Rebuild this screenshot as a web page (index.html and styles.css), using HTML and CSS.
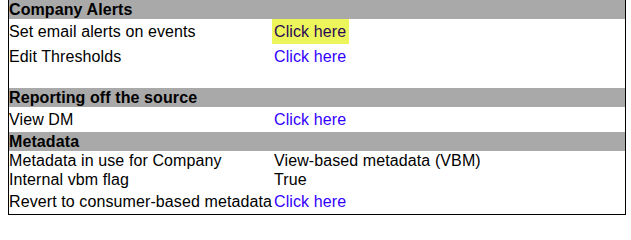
FILE: index.html
```html
<!DOCTYPE html>
<html>
<head>
<meta charset="utf-8">
<link rel="stylesheet" href="styles.css">
</head>
<body>
<table class="settings">
  <tr class="section"><td colspan="2">Company Alerts</td></tr>
  <tr class="linkrow"><td class="label">Set email alerts on events</td><td class="value"><a class="link active" href="#">Click here</a></td></tr>
  <tr class="linkrow"><td class="label">Edit Thresholds</td><td class="value"><a class="link" href="#">Click here</a></td></tr>
  <tr class="plain"><td class="label">&nbsp;</td><td class="value"></td></tr>
  <tr class="section"><td colspan="2">Reporting off the source</td></tr>
  <tr class="linkrow"><td class="label">View DM</td><td class="value"><a class="link" href="#">Click here</a></td></tr>
  <tr class="section"><td colspan="2">Metadata</td></tr>
  <tr class="plain"><td class="label">Metadata in use for Company</td><td class="value text">View-based metadata (VBM)</td></tr>
  <tr class="plain"><td class="label">Internal vbm flag</td><td class="value text">True</td></tr>
  <tr class="linkrow"><td class="label">Revert to consumer-based metadata</td><td class="value"><a class="link" href="#">Click here</a></td></tr>
</table>
</body>
</html>
```
FILE: styles.css
```css
html, body {
  margin: 0;
  padding: 0;
  background: #ffffff;
}
body {
  padding-left: 8px;
  font-family: "Liberation Sans", Arial, sans-serif;
  font-size: 16px;
  letter-spacing: 0.1px;
  color: #000000;
}
.settings {
  width: 618px;
  border-collapse: collapse;
  border-left: 1px solid #000;
  border-right: 1px solid #000;
  border-bottom: 1px solid #000;
}
.settings td {
  padding: 0;
  line-height: 19px;
  height: 19px;
  white-space: nowrap;
}
.section td {
  background: #a9a9a9;
  font-weight: bold;
}
.label {
  width: 1px;
}
.text {
  padding-left: 2px !important;
}
.linkrow td {
  height: 25px;
  vertical-align: middle;
}
.link {
  display: inline-block;
  padding: 3px 3px 3px 2px;
  line-height: 19px;
  color: #3300ff;
  text-decoration: none;
}
.link.active {
  background: #ecf55a;
  color: #2a0a55;
}
```
